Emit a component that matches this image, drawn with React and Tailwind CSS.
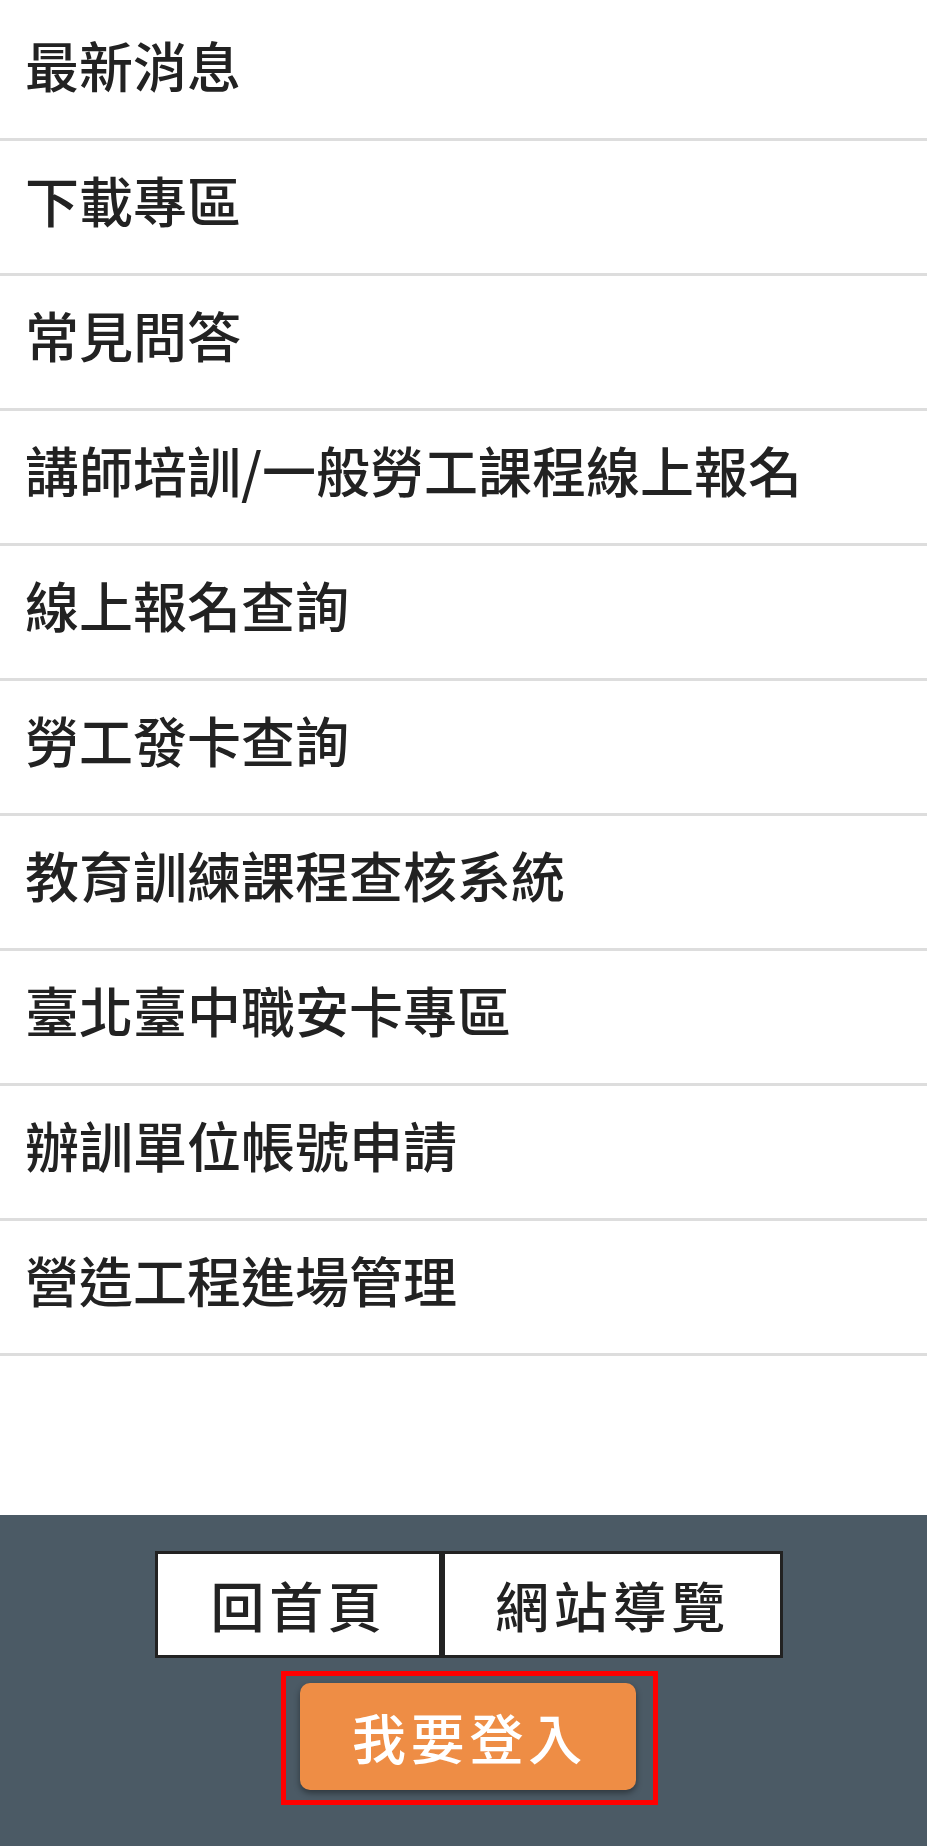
import React from "react";

const items = [
  "最新消息",
  "下載專區",
  "常見問答",
  "講師培訓/一般勞工課程線上報名",
  "線上報名查詢",
  "勞工發卡查詢",
  "教育訓練課程查核系統",
  "臺北臺中職安卡專區",
  "辦訓單位帳號申請",
  "營造工程進場管理",
];

const font = { fontFamily: '"Noto Sans CJK TC", "Noto Sans", sans-serif' };

export default function App() {
  return (
    <div className="flex min-h-screen flex-col bg-white" style={font}>
      <ul className="pt-[6px]">
        {items.map((t) => (
          <li
            key={t}
            className="flex h-[135px] items-center border-b-[3px] border-[#dddddd] pl-[25px] pb-[15px] text-[54px] font-medium leading-none text-[#222222]"
          >
            {t}
          </li>
        ))}
      </ul>
      <footer className="mt-auto flex h-[331px] flex-col items-center bg-[#4b5a65] pl-[11px] pt-[36px]">
        <div className="flex">
          <a className="flex h-[107px] w-[287px] items-center justify-center border-[3px] border-[#222222] bg-white text-[54px] font-medium leading-none tracking-[4.7px] text-[#222222]">
            回首頁
          </a>
          <a className="flex h-[107px] w-[341px] items-center justify-center border-[3px] border-[#222222] bg-white text-[54px] font-medium leading-none tracking-[4.7px] text-[#222222]">
            網站導覽
          </a>
        </div>
        <div className="mt-[13px] border-[5px] border-[#ff0000] pb-[10px] pl-[14px] pr-[17px] pt-[7px]">
          <a className="flex h-[107px] w-[336px] items-center justify-center rounded-[10px] bg-[#ee8d45] pl-[4px] text-[54px] font-medium leading-none tracking-[4.7px] text-white shadow-[0_3px_6px_rgba(0,0,0,0.4)]">
            我要登入
          </a>
        </div>
      </footer>
    </div>
  );
}
